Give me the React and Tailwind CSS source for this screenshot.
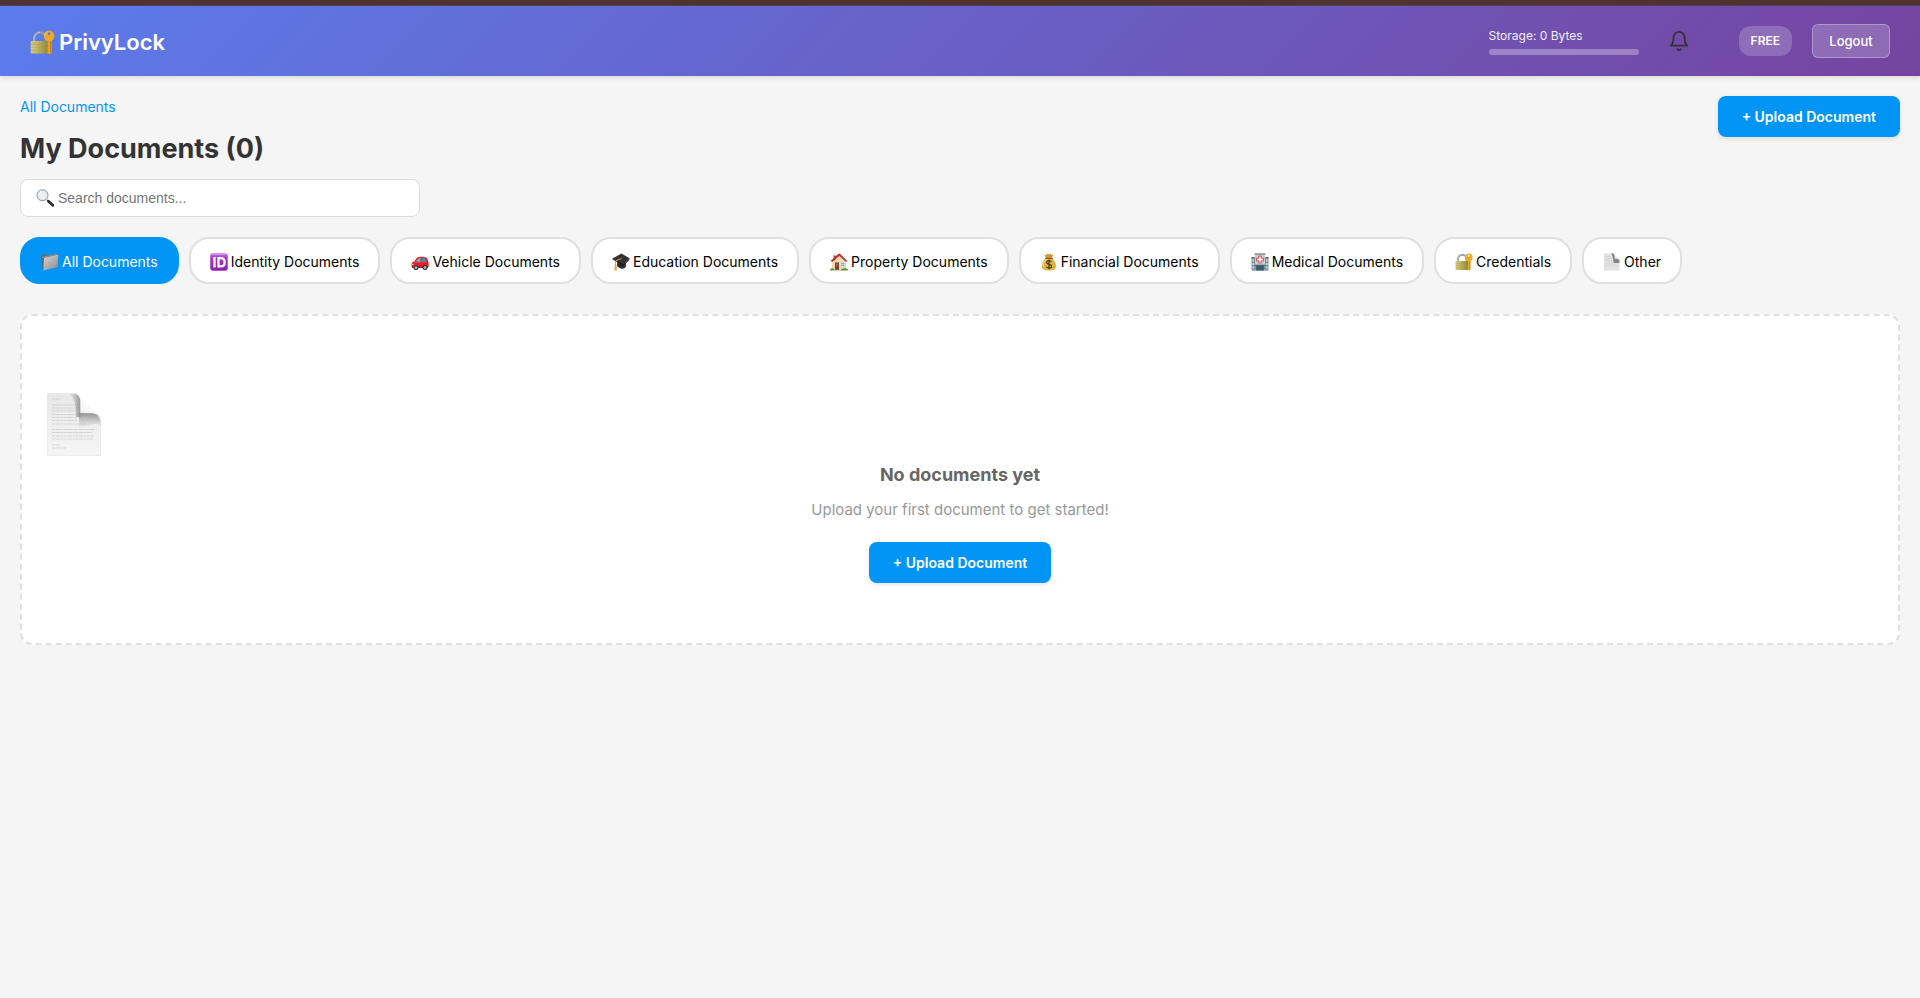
import { useState } from "react";

const svgProps = { viewBox: "0 0 36 36", "aria-hidden": true };

function LockKeyIcon({ className }) {
  return (
    <svg {...svgProps} className={className}>
      <defs>
        <linearGradient id="lockBody" x1="0" x2="1" y1="0" y2="0">
          <stop offset="0" stopColor="#d6cc86" />
          <stop offset=".35" stopColor="#c3b867" />
          <stop offset="1" stopColor="#8b7f34" />
        </linearGradient>
      </defs>
      <path d="M6 20V12a8.5 8.5 0 0 1 17 0v8" fill="none" stroke="#8d9cab" strokeWidth="3.6" />
      <path d="M5.6 18V12a9 9 0 0 1 9-8.6" fill="none" stroke="#c3ccd4" strokeWidth="1.2" />
      <rect x="1" y="16" width="26" height="18" rx="1.6" fill="url(#lockBody)" />
      <path d="M1.5 20.5h25M1.5 25h25M1.5 29.5h25" stroke="#a89c4c" strokeWidth="1" opacity=".7" />
      <path d="M25.5 14h5.5v19.5l-2.5 1.5-3.5-1.5v-3l1.5-1.5-1.5-1.5v-2.5l1.5-1.5-1-1.5z" fill="#e9a31d" />
      <path d="M29.5 15v18" stroke="#b9770d" strokeWidth="1" />
      <path fillRule="evenodd" d="M27.500.8a7.700 7.700 0 1 1 0 15.400 7.700 7.700 0 0 1 0-15.400zm0 2.600a2 2 0 1 0 0 4 2 2 0 0 0 0-4z" fill="#eda922" />
      <path d="M21 9a6.500 6.500 0 0 1 4-6" stroke="#f8cb62" strokeWidth="1.2" fill="none" />
    </svg>
  );
}

function SearchIcon({ className }) {
  return (
    <svg {...svgProps} className={className}>
      <path d="M21.5 21.5l5 5" stroke="#8c969e" strokeWidth="3" />
      <path d="M25 24.5l8.500 8" stroke="#23272c" strokeWidth="5.5" strokeLinecap="round" />
      <path d="M26.5 24.5l7 6.500" stroke="#5d646b" strokeWidth="1" />
      <circle cx="13" cy="12.5" r="11" fill="#e9f0f4" stroke="#87919a" strokeWidth="2" />
      <circle cx="13" cy="12.5" r="9" fill="none" stroke="#c6d2da" strokeWidth="1" />
      <path d="M6 12a7 7 0 0 1 7-6.500" stroke="#fff" strokeWidth="2.2" fill="none" />
    </svg>
  );
}

function FolderIcon({ className }) {
  return (
    <svg {...svgProps} className={className}>
      <defs>
        <linearGradient id="folderFront" x1="0" x2="1" y1="0" y2="1">
          <stop offset="0" stopColor="#d3d3d3" />
          <stop offset="1" stopColor="#8c8c8c" />
        </linearGradient>
      </defs>
      <path d="M1 8l1-4 9-1.500 2 2.500 18-3.500 2 1.500V26L4 32z" fill="#666b70" />
      <path d="M2 9l30-6.500" stroke="#b9bdc0" strokeWidth="1" />
      <path d="M6 10.500L34.500 4.500 33 28 4.500 35z" fill="url(#folderFront)" />
      <path d="M6 10.500L34.500 4.500" stroke="#e9e9e9" strokeWidth="1" />
      <path d="M1 8l3 25" stroke="#55595d" strokeWidth="1.2" />
    </svg>
  );
}

function IdIcon({ className }) {
  return (
    <svg {...svgProps} className={className}>
      <defs>
        <linearGradient id="idBg" x1="0" x2="0" y1="0" y2="1">
          <stop offset="0" stopColor="#c069d8" />
          <stop offset=".3" stopColor="#a838c7" />
          <stop offset="1" stopColor="#8c1fab" />
        </linearGradient>
      </defs>
      <rect x=".5" y=".5" width="35" height="35" rx="6" fill="url(#idBg)" />
      <path d="M5 3h26" stroke="#dda5ec" strokeWidth="1.6" strokeLinecap="round" />
      <path d="M9 8v21" stroke="#fff" strokeWidth="4.6" />
      <path d="M17 10.200h4.500c5 0 7.800 3 7.800 8.300s-2.800 8.300-7.800 8.300H17z" fill="none" stroke="#fff" strokeWidth="4.4" />
    </svg>
  );
}

function CarIcon({ className }) {
  return (
    <svg {...svgProps} className={className}>
      <path d="M1 27c-.8-6 .5-9 6-10 3-6 5-9 11-9.500 7-.6 12 .5 14 3 2 3 3.500 8 3.500 13 0 4-1 6-3 6.500H3z" fill="#e0202a" />
      <path d="M10 17c2-4.500 4.500-7 9-7.200V18z" fill="#63b7cf" />
      <path d="M21 9.700c4 0 7 .6 8.500 2.300 1 1.500 1.600 3 2 5L21 18z" fill="#3f8ca5" />
      <path d="M7 18.500l25-1" stroke="#ff6a63" strokeWidth="1" />
      <path d="M2 28h32" stroke="#7e1016" strokeWidth="2" />
      <ellipse cx="3.5" cy="23" rx="1.8" ry="1.5" fill="#ffe3a0" />
      <circle cx="10" cy="29" r="5" fill="#33363a" />
      <circle cx="10" cy="29" r="2.6" fill="#b9bec3" />
      <circle cx="28" cy="29" r="5" fill="#33363a" />
      <circle cx="28" cy="29" r="2.6" fill="#b9bec3" />
    </svg>
  );
}

function GraduationIcon({ className }) {
  return (
    <svg {...svgProps} className={className}>
      <path d="M11 15l16 5 1 7c-3 4-7 5-10 4-3-.8-6-2.500-8-6z" fill="#26282b" />
      <path d="M1 11L19 1l16 9.500L23.500 23z" fill="#303236" />
      <path d="M1 11l22.500 12L35 10.500v2.300L23.500 25.500 1 13z" fill="#151618" />
      <path d="M19 11L7.500 15.500 6.800 26" fill="none" stroke="#e59a2b" strokeWidth="2" />
      <path d="M5.500 24h3.500l.8 10.500-5 .5z" fill="#e8a43c" />
      <circle cx="19" cy="11" r="1.6" fill="#595c61" />
    </svg>
  );
}

function HouseIcon({ className }) {
  return (
    <svg {...svgProps} className={className}>
      <path d="M4 15L18 4l14 12v18H4z" fill="#efd9b0" />
      <path d="M7 4h5v8l-5 4z" fill="#a4523d" />
      <path d="M6 3h7v2.500H6z" fill="#d8d3ca" />
      <path d="M1.500 15.500L17 1.500h3L34.500 16l-2 2L18.500 6 4 18z" fill="#b8332c" />
      <path d="M18 1.500L34 16" stroke="#e06a5e" strokeWidth="1" />
      <path d="M10 19h8v15h-8z" fill="#7b3f27" />
      <path d="M12 21h4v6h-4z" fill="#a6623f" />
      <path d="M21.500 19h8v8h-8z" fill="#5aa6d6" stroke="#fff5e0" strokeWidth="1.2" />
      <path d="M25.500 19v8M21.500 23h8" stroke="#fff5e0" strokeWidth=".8" />
      <path d="M0 35c0-4 3-5 6-4 2 0 3 2 3 4zM21 35c1-3 4-4 7-4 4-1 8 0 8 4z" fill="#5f8f35" />
      <path d="M9 33.500h12V35H9z" fill="#b5aa9a" />
    </svg>
  );
}

function MoneyBagIcon({ className }) {
  return (
    <svg {...svgProps} className={className}>
      <path d="M12 10L9 3l4 1 2-3 3 2 3-2 2 3 4-1-4 7z" fill="#c99b35" />
      <path d="M12 9.500h12c5 5 8 11 8 17 0 6-4 8.500-14 8.500S4 32.500 4 26.500c0-6 3-12 8-17z" fill="#dfb343" />
      <path d="M12 12C8 17 6.500 22 6.500 27" stroke="#f4d67c" strokeWidth="2" fill="none" />
      <path d="M11 10.500h14" stroke="#8d3f1d" strokeWidth="2.4" strokeLinecap="round" />
      <path d="M23 17.500c-1-1.500-3-2-5-2-3 0-5 1.300-5 3.600 0 5 10.500 2.300 10.500 7.200 0 2.400-2.500 3.700-5.500 3.700-2.500 0-4.500-.8-5.700-2.500M18 13v19.500" stroke="#3e3314" strokeWidth="2.2" fill="none" />
    </svg>
  );
}

function HospitalIcon({ className }) {
  return (
    <svg {...svgProps} className={className}>
      <path d="M1 9h34v26H1z" fill="#7f9098" />
      <path d="M1 8h6v2H1zM29 8h6v2h-6z" fill="#56636a" />
      <path d="M3 13h3v4H3zM3 20h3v4H3zM3 27h3v4H3zM30 13h3v4h-3zM30 20h3v4h-3zM30 27h3v4h-3z" fill="#c8e0e8" />
      <path d="M8 2h20v33H8z" fill="#c9ccce" />
      <path d="M7 .8h22v2.400H7z" fill="#6e7a80" />
      <path d="M15.500 6h5v4.500H25v5h-4.500V20h-5v-4.500H11v-5h4.500z" fill="#fff" stroke="#e4434c" strokeWidth="2" />
      <path d="M8 23.500h20V26H8z" fill="#46616f" />
      <path d="M9 26h18v9H9z" fill="#3c667d" />
      <path d="M13.500 26v9M18 26v9M22.500 26v9" stroke="#243f4e" strokeWidth="1" />
    </svg>
  );
}

function PageIcon({ className }) {
  return (
    <svg {...svgProps} className={className}>
      <path d="M2 1h18c3 1 3 5 3 9 5-1 10 1 10 6v19H2z" fill="#e2e2e2" />
      <path d="M16 1h5c3 2 3 6 2.500 10 4-.5 8 0 9.500 4v5H22c-2-4-1-13-6-19z" fill="#848484" />
      <path d="M21.500 2L33 13.500c-2.500-2-6-2.500-9.500-2.300.3-3.500 0-7-2-9.200z" fill="#eee" />
      <path d="M5 7h10M5 11h12M5 15h13M5 20h14M5 24h22" stroke="#c4c4c4" strokeWidth="1" />
    </svg>
  );
}

function LargePageIcon({ className }) {
  return (
    <svg viewBox="0 0 54 63" aria-hidden="true" className={className}>
      <defs>
        <linearGradient id="pageBg" x1="0" x2="0" y1="0" y2="1">
          <stop offset="0" stopColor="#e8e8e8" />
          <stop offset="1" stopColor="#f5f5f5" />
        </linearGradient>
        <linearGradient id="pageLeftShade" x1="0" x2="1" y1="0" y2="0">
          <stop offset="0" stopColor="#999" stopOpacity="0" />
          <stop offset="1" stopColor="#888" stopOpacity=".85" />
        </linearGradient>
        <linearGradient id="pageDownShade" x1="0" x2="0" y1="0" y2="1">
          <stop offset="0" stopColor="#888" stopOpacity=".9" />
          <stop offset="1" stopColor="#aaa" stopOpacity="0" />
        </linearGradient>
        <linearGradient id="pageFold" x1="0" x2="1" y1="1" y2="0">
          <stop offset="0" stopColor="#e0e0e0" />
          <stop offset=".5" stopColor="#fafafa" />
          <stop offset="1" stopColor="#dedede" />
        </linearGradient>
      </defs>
      <path d="M.5.500H26c5 0 8 3 8 8v12h12c5 0 7.500 3 7.500 8v34H.5z" fill="url(#pageBg)" stroke="#e4e4e4" strokeWidth=".6" />
      <g stroke="#cdcdcd" strokeWidth=".8" strokeDasharray="3 .5 5 .5 2 .5">
        <path d="M5 6h9M5 12h24M5 15h25M5 18h24M5 21.500h24M5 24.500h25M5 27.500h25M5 31h34M5 36.500h43M5 39.500h40M5 43h42M5 46h41M5 52h8M5 55h14" />
      </g>
      <path d="M22 .5h4c5 0 7.500 3 7.500 8V24H29C29 12 28 6 22 .500z" fill="url(#pageLeftShade)" />
      <path d="M32 20h14c5 0 7 3 7.500 8v4c-6-3-14 2-21.500 3z" fill="url(#pageDownShade)" />
      <path d="M27 .700c2 .3 3.500 1 5 2.300L51 22c1 1 2 3 2 5-1.500-5-4-6.500-8-6.700L33.500 20V8.500c0-4-2-7-6.500-7.800z" fill="url(#pageFold)" />
    </svg>
  );
}

function BellIcon() {
  return (
    <svg viewBox="0 0 24 24" aria-hidden="true" className="w-[22px] h-[22px]" fill="none" stroke="currentColor" strokeWidth="2" strokeLinecap="round" strokeLinejoin="round">
      <path d="M18 8A6 6 0 0 0 6 8c0 7-3 9-3 9h18s-3-2-3-9" />
      <path d="M13.730 21a2 2 0 0 1-3.460 0" />
    </svg>
  );
}

const CATEGORIES = [
  { id: "all", label: "All Documents", Icon: FolderIcon },
  { id: "identity", label: "Identity Documents", Icon: IdIcon },
  { id: "vehicle", label: "Vehicle Documents", Icon: CarIcon },
  { id: "education", label: "Education Documents", Icon: GraduationIcon },
  { id: "property", label: "Property Documents", Icon: HouseIcon },
  { id: "financial", label: "Financial Documents", Icon: MoneyBagIcon },
  { id: "medical", label: "Medical Documents", Icon: HospitalIcon },
  { id: "credentials", label: "Credentials", Icon: LockKeyIcon },
  { id: "other", label: "Other", Icon: PageIcon },
];

function UploadButton() {
  return (
    <button type="button" className="h-[41px] px-6 rounded-lg bg-[#0295f5] text-white text-sm font-semibold whitespace-nowrap shadow-[0_2px_4px_rgba(0,0,0,0.1)]">
      + Upload Document
    </button>
  );
}

function Header() {
  return (
    <header className="h-[70px] px-[30px] flex items-center justify-between text-white bg-[linear-gradient(135deg,#5b7cec_0%,#7644a0_100%)] shadow-[0_2px_4px_rgba(0,0,0,0.1)]">
      <div className="pt-0.5 flex items-center gap-1">
        <LockKeyIcon className="w-[25px] h-[25px]" />
        <span className="text-[22px] leading-8 font-semibold">PrivyLock</span>
      </div>
      <div className="flex items-center gap-5">
        <div className="w-[150px] flex flex-col gap-1">
          <span className="text-xs leading-[18px] text-white/90">Storage: 0 Bytes</span>
          <div className="h-1.5 rounded-full bg-white/30" />
        </div>
        <button type="button" aria-label="Notifications" className="w-10 h-10 mr-5 flex items-center justify-center text-[#333]">
          <BellIcon />
        </button>
        <span className="h-[30px] px-3 flex items-center rounded-xl bg-white/20 text-xs font-semibold">FREE</span>
        <button type="button" className="h-[34px] w-[78px] pt-0.5 rounded-md border border-white/30 bg-white/20 text-[13px] font-medium">
          Logout
        </button>
      </div>
    </header>
  );
}

export default function App() {
  const [search, setSearch] = useState("");
  const [active, setActive] = useState("all");

  return (
    <div className="min-h-screen bg-[#f5f5f5] font-['Inter',sans-serif] text-[#333]">
      <div className="h-1.5 bg-[#50332f] border-b border-[#4d4260]" />
      <Header />

      <main className="p-5">
        <div className="flex items-start justify-between">
          <div>
            <nav className="text-sm leading-[22px]">
              <a href="#all" className="text-[#0295f5]">All Documents</a>
            </nav>
            <h1 className="mt-[13px] text-[27px] leading-9 font-bold">My Documents (0)</h1>
          </div>
          <UploadButton />
        </div>

        {/* Search */}
        <label className="mt-3 w-full max-w-[400px] h-[38px] px-[15px] flex items-center gap-1 rounded-lg border border-[#ddd] bg-white">
          <SearchIcon className="w-[18px] h-[18px] shrink-0" />
          <input
            type="text"
            aria-label="Search documents"
            value={search}
            onChange={e => setSearch(e.target.value)}
            placeholder="Search documents..."
            className="flex-1 min-w-0 bg-transparent font-['Liberation_Sans',sans-serif] text-sm placeholder:text-[#757575] focus:outline-none"
          />
        </label>

        {/* Category filter */}
        <div className="mt-5 flex flex-wrap gap-2.5">
          {CATEGORIES.map(({ id, label, Icon }) => (
            <button
              key={id}
              type="button"
              onClick={() => setActive(id)}
              className={`h-[47px] px-[19px] pt-0.5 flex items-center gap-[3px] rounded-[20px] border-2 text-sm whitespace-nowrap ${
                active === id
                  ? "bg-[#0295f5] border-[#0295f5] text-white"
                  : "bg-white border-[#e0e0e0] text-black"
              }`}
            >
              <Icon className="w-[18px] h-[18px] shrink-0" />
              {label}
            </button>
          ))}
        </div>

        {/* Empty state */}
        <section className="mt-[30px] px-[25px] pt-[77px] pb-[60px] rounded-xl border-2 border-dashed border-[#e0e0e0] bg-white">
          <LargePageIcon className="w-[54px] h-[63px]" />
          <div className="mt-[5px] flex flex-col items-center">
            <h3 className="text-lg leading-7 font-bold text-[#666]">No documents yet</h3>
            <p className="mt-[9px] mb-5 text-[15px] leading-6 text-[#999]">Upload your first document to get started!</p>
            <UploadButton />
          </div>
        </section>
      </main>
    </div>
  );
}
